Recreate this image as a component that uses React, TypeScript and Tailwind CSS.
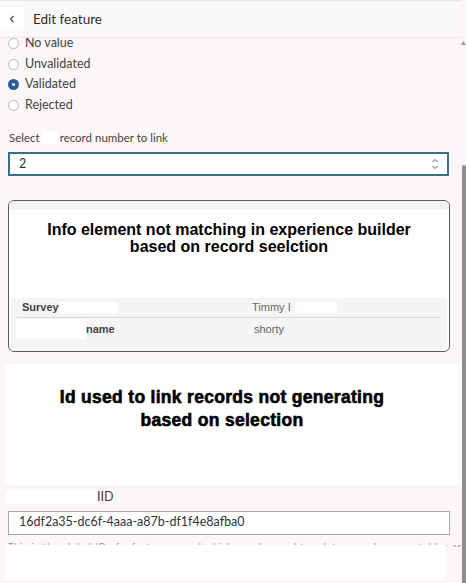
import React from "react";

const statuses = [
  { label: "No value", checked: false },
  { label: "Unvalidated", checked: false },
  { label: "Validated", checked: true },
  { label: "Rejected", checked: false },
];

function Radio({ checked }: { checked: boolean }) {
  if (checked) {
    return (
      <span className="w-[11px] h-[11px] rounded-full bg-[#2c5c98] flex items-center justify-center">
        <span className="w-[3px] h-[3px] rounded-full bg-white" />
      </span>
    );
  }
  return <span className="w-[11px] h-[11px] rounded-full border border-[#b9b6b4] bg-white" />;
}

function Blank({ className }: { className: string }) {
  return <span className={"inline-block bg-white align-middle " + className} />;
}

export default function App() {
  return (
    <div
      className="w-[466px] h-[583px] bg-[#faf7f6] overflow-hidden flex text-[#323232]"
      style={{ fontFamily: "Lato, 'Noto Sans', sans-serif" }}
    >
      <div className="flex-1 flex flex-col min-w-0">
        {/* header */}
        <div className="h-[38px] shrink-0 border-t border-[#ece8e6] border-b bg-[#fbf9f8] flex items-center relative z-10">
          <button className="w-6 h-6 bg-white flex items-center justify-center text-[#444]">
            <svg width="8" height="8" viewBox="0 0 8 8" fill="none" stroke="currentColor" strokeWidth="1.2">
              <path d="M5.5 1 L2.5 4 L5.5 7" />
            </svg>
          </button>
          <span className="ml-[9px] text-[13.5px] text-[#2b2b2b]">Edit feature</span>
        </div>

        <div className="flex-1 flex flex-col overflow-hidden">
          {/* validation status */}
          <div className="flex flex-col -mt-[5px] pl-2">
            {statuses.map((s) => (
              <div key={s.label} className="h-[20.7px] flex items-center gap-[6px] text-[12.5px] text-[#444]">
                <Radio checked={s.checked} />
                <span>{s.label}</span>
              </div>
            ))}
          </div>

          <div className="mt-[13px] pl-[9px] text-[11.5px] text-[#444] flex items-center">
            Select <Blank className="w-[16px] h-[13px] mx-[2px]" /> record number to link
          </div>
          <div className="mt-[6px] ml-2 w-[441px] h-[24px] border-2 border-[#3d6e87] bg-[#fdfeff] flex items-center pl-[9px] pr-[8px] text-[12.5px] text-[#333]">
            <span className="flex-1">2</span>
            <svg width="8" height="12" viewBox="0 0 8 12" fill="none" stroke="#555" strokeWidth="1">
              <path d="M1.5 4 L4 1.5 L6.5 4" />
              <path d="M1.5 8 L4 10.5 L6.5 8" />
            </svg>
          </div>

          {/* info element */}
          <div className="mt-[24px] ml-2 w-[442px] h-[152px] rounded-md border-[1.5px] border-[#5c5c5c] bg-white overflow-hidden flex flex-col">
            <div className="h-[9px] bg-[#f3f3f3] shrink-0" />
            <div
              className="flex-1 flex flex-col items-center pt-[11px] text-[16px] font-bold text-black leading-[17px]"
              style={{ fontFamily: "'Liberation Sans', Arial, sans-serif" }}
            >
              <span>Info element not matching in experience builder</span>
              <span>based on record seelction</span>
            </div>
            <div
              className="mx-[2px] bg-[#f5f5f5] text-[11px] text-[#444] shrink-0 pb-[11px]"
              style={{ fontFamily: "'Liberation Sans', Arial, sans-serif" }}
            >
              <div className="h-[20px] flex items-center border-b border-[#d8d8d8] mx-[6px]">
                <div className="w-[235px] pl-[5px] flex items-center font-bold">
                  Survey <Blank className="w-[58px] h-[12px] ml-[1px]" />
                </div>
                <div className="flex items-center text-[#666]">
                  Timmy I <Blank className="w-[42px] h-[12px] ml-[4px]" />
                </div>
              </div>
              <div className="h-[22px] flex items-center">
                <div className="w-[243px] flex items-center font-bold">
                  <Blank className="w-[70px] h-[20px] ml-[5px]" />
                  name
                </div>
                <div className="text-[#666]">shorty</div>
              </div>
            </div>
          </div>

          {/* record link id */}
          <div
            className="mt-[12px] ml-[5px] w-[456px] h-[121px] bg-white flex flex-col items-center pt-[22px] pr-[22px] text-[17.5px] font-bold text-black leading-[23px] tracking-[0.3px] [-webkit-text-stroke:0.6px_black]"
            style={{ fontFamily: "'Liberation Sans', Arial, sans-serif" }}
          >
            <span>Id used to link records not generating</span>
            <span>based on selection</span>
          </div>

          <div className="mt-[3px] ml-[5px] flex items-center text-[12.5px] text-[#444]">
            <Blank className="w-[92px] h-[14px]" />
            <span>IID</span>
          </div>
          <div className="mt-[4px] ml-2 w-[442px] h-[24px] border border-[#a9a9a9] bg-white flex items-center pl-[10px] text-[12.5px] text-[#333]">
            16df2a35-dc6f-4aaa-a87b-df1f4e8afba0
          </div>
          <div className="relative ml-2 mt-[8px] h-[40px]">
            <div className="text-[9px] text-[#999] tracking-[1px] whitespace-nowrap overflow-hidden h-[4px] leading-[8px]">
              This is the global ID of a feature record which may be used to relate records across tables and views
            </div>
            <div className="absolute left-[-3px] top-[2px] w-[441px] h-[34px] bg-white" />
          </div>
        </div>
      </div>

      {/* scrollbar */}
      <div className="w-[5px] shrink-0 flex flex-col items-center">
        <div className="h-[40px]" />
        <svg width="5" height="5" viewBox="0 0 5 5">
          <path d="M0 5 L2.5 1 L5 5 Z" fill="#9a9a9a" />
        </svg>
        <div className="h-[120px]" />
        <div className="flex-1 w-[4px] bg-[#8e8e8e] rounded-t-sm" />
      </div>
    </div>
  );
}
